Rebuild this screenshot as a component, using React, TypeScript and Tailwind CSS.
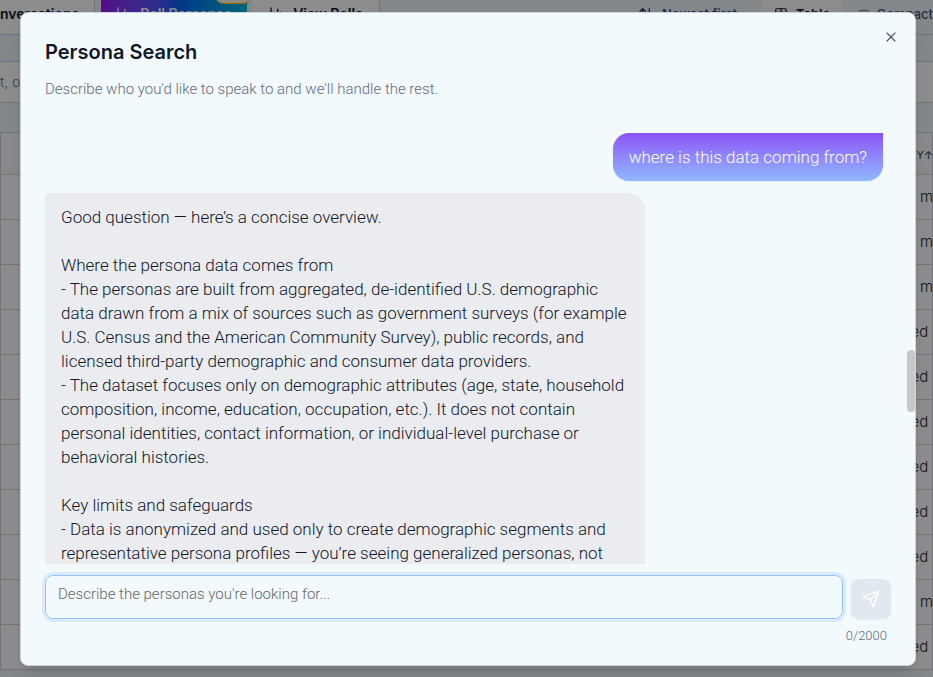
import { useState } from "react";
import { ArrowUpDown, ChartColumn, Send, Table, X } from "lucide-react";

const LIMIT = 2000;

const ROWS = ["r m", "r m", "r m", "ed", "ed", "ed", "ed", "ed", "ed", "r m", "ed"];

const REPLY = `Good question — here’s a concise overview.

Where the persona data comes from
- The personas are built from aggregated, de-identified U.S. demographic
data drawn from a mix of sources such as government surveys (for example
U.S. Census and the American Community Survey), public records, and
licensed third-party demographic and consumer data providers.
- The dataset focuses only on demographic attributes (age, state, household
composition, income, education, occupation, etc.). It does not contain
personal identities, contact information, or individual-level purchase or
behavioral histories.

Key limits and safeguards
- Data is anonymized and used only to create demographic segments and
representative persona profiles — you’re seeing generalized personas, not`;

function CompactIcon() {
  return (
    <svg width="14" height="14" viewBox="0 0 24 24" fill="none" stroke="currentColor" strokeWidth="2">
      <rect x="1" y="3" width="22" height="18" rx="2" />
    </svg>
  );
}

function Toolbar() {
  return (
    <div className="flex h-[35px] items-start border-b border-slate-300 text-sm font-semibold text-gray-900">
      <button className="h-[34px] w-[95px] shrink-0 overflow-hidden border-r border-slate-300 bg-white pb-1.5 text-left">
        nversations
      </button>
      <button className="relative ml-1.5 flex h-[34px] w-[146px] shrink-0 items-center justify-center gap-2 bg-linear-to-r from-purple-600 via-blue-600 to-cyan-500 pb-1.5 text-white">
        <ChartColumn size={16} />
        Roll Personas
        <span className="absolute -top-3 -right-1 h-4 w-9 rounded-full border border-amber-400 bg-amber-50" />
      </button>
      <button className="ml-1.5 flex h-[34px] w-[127px] shrink-0 items-center justify-center gap-2 border-r border-slate-300 bg-white pb-1.5">
        <ChartColumn size={16} />
        View Rolls
      </button>
      <div className="ml-auto flex h-[34px] shrink-0 items-center pb-1.5 text-[13px]">
        <button className="flex items-center gap-2 pr-6 font-medium text-slate-700">
          <ArrowUpDown size={16} />
          Newest first
        </button>
        <button className="flex h-[32px] w-[82px] items-center justify-center gap-2 rounded-lg bg-white">
          <Table size={14} />
          Table
        </button>
        <button className="flex w-[90px] items-center gap-2 pl-4 font-medium text-slate-600">
          <CompactIcon />
          Compact
        </button>
      </div>
    </div>
  );
}

function PersonaTable() {
  return (
    <table className="w-full table-fixed border-x border-slate-300 text-[15px] text-slate-800">
      <thead>
        <tr className="h-[41px] border-b border-slate-300 bg-gray-50">
          <th aria-label="Persona" />
          <th className="w-[22px] p-0 pt-1 text-left text-[11px] font-medium whitespace-nowrap text-slate-600">LY↑</th>
        </tr>
      </thead>
      <tbody>
        {ROWS.map((text, i) => (
          <tr key={i} className="h-[45px] border-b border-slate-300 bg-white">
            <td />
            <td className="p-0 pt-0.5 whitespace-nowrap">{text}</td>
          </tr>
        ))}
      </tbody>
    </table>
  );
}

function Background() {
  return (
    <div className="h-full overflow-hidden bg-[#f0f6fa] font-[Inter,sans-serif]" aria-hidden="true">
      <Toolbar />
      <div className="h-[26px]" />
      <div className="flex h-[42px] items-center border-y border-slate-300 bg-white text-sm text-slate-500">t, o</div>
      <div className="h-[30px] border-b border-slate-300" />
      <PersonaTable />
    </div>
  );
}

function Composer() {
  const [text, setText] = useState("");

  return (
    <form className="mt-[11px]" onSubmit={(e) => e.preventDefault()}>
      <div className="flex items-end gap-2">
        <textarea
          aria-label="Describe the personas"
          rows={1}
          maxLength={LIMIT}
          value={text}
          onChange={(e) => setText(e.target.value)}
          placeholder="Describe the personas you're looking for..."
          className="h-11 min-w-0 flex-1 resize-none rounded-lg border border-blue-300 px-3 py-2 text-[15px] leading-5 text-slate-900 ring-3 ring-blue-100 outline-none placeholder:text-[#666666]"
        />
        <button
          type="submit"
          aria-label="Send"
          className="flex size-10 shrink-0 items-center justify-center rounded-lg bg-slate-200 text-white shadow-xs"
        >
          <Send size={18} strokeWidth={1.75} />
        </button>
      </div>
      <p className="mt-2 pr-1 text-right text-[13px] leading-[18px] text-[#626a80]">
        {text.length}/{LIMIT}
      </p>
    </form>
  );
}

export default function App() {
  return (
    <div className="relative h-screen overflow-hidden font-[Roboto,sans-serif] font-[350]">
      <Background />
      <div className="absolute inset-0 flex bg-black/45 pt-3 pr-[17px] pb-[11px] pl-5">
        <section
          role="dialog"
          aria-labelledby="dialog-title"
          className="relative flex min-w-0 flex-1 flex-col rounded-lg border border-slate-300 bg-[#f2fafe] px-6 pt-6 pb-5 shadow-lg"
        >
          <button aria-label="Close" className="absolute top-4 right-4 text-gray-600">
            <X size={16} strokeWidth={1.75} />
          </button>
          <h2 id="dialog-title" className="font-[Inter,sans-serif] text-xl leading-[30px] font-semibold text-slate-900">
            Persona Search
          </h2>
          <p className="mt-3 text-[15px] leading-5 text-[#626a80]">
            Describe who you'd like to speak to and we'll handle the rest.
          </p>

          {/* Messages */}
          <div className="mt-[34px] flex min-h-0 flex-1 flex-col gap-3 overflow-hidden pr-2 text-[17px] leading-6">
            <div className="shrink-0 self-end rounded-2xl rounded-tr-none bg-linear-to-b from-[#8b50f5] to-[#8fb8ff] px-4 py-3 text-white shadow-xs">
              where is this data coming from?
            </div>
            <div className="w-[600px] max-w-full shrink-0 rounded-tr-2xl bg-[#ebecef] px-4 py-3 whitespace-pre-wrap text-slate-900">
              {REPLY}
            </div>
          </div>

          <Composer />
          <div className="absolute top-[337px] right-0 h-[62px] w-2 rounded-full bg-[#c5c9cc]" />
        </section>
      </div>
    </div>
  );
}
